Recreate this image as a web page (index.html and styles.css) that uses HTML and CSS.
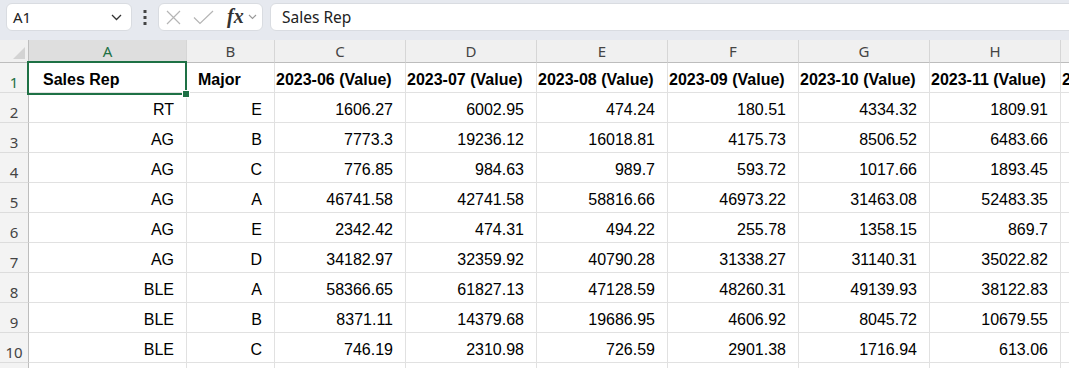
FILE: index.html
```html
<!DOCTYPE html>
<html lang="en">
<head>
  <meta charset="UTF-8" />
  <title>Sales Rep - Workbook</title>
  <link rel="stylesheet" href="styles.css">
</head>
<body>
  <!-- Formula bar -->
  <div class="formula-bar">
    <div class="name-box">
      <span>A1</span>
      <svg width="11" height="7" viewBox="0 0 11 7"><path d="M1 1l4.5 4.5L10 1" fill="none" stroke="#333" stroke-width="1.3"/></svg>
    </div>
    <div class="more">
      <svg width="4" height="15" viewBox="0 0 4 15"><rect x="0.5" y="0" width="3" height="3" fill="#444"/><rect x="0.5" y="6" width="3" height="3" fill="#444"/><rect x="0.5" y="12" width="3" height="3" fill="#444"/></svg>
    </div>
    <div class="fx-box">
      <svg class="fx-icon" width="15" height="15" viewBox="0 0 15 15"><path d="M1 1l13 13M14 1L1 14" stroke="#b5b5b5" stroke-width="1.2" fill="none"/></svg>
      <svg class="fx-icon" width="21" height="15" viewBox="0 0 21 15"><path d="M1 7.5l6 6L20 1" stroke="#b5b5b5" stroke-width="1.2" fill="none"/></svg>
      <span class="fx">fx</span>
      <svg width="9" height="6" viewBox="0 0 9 6"><path d="M1 1l3.5 3.5L8 1" fill="none" stroke="#999" stroke-width="1.1"/></svg>
    </div>
    <div class="formula-input">Sales Rep</div>
  </div>

  <!-- Sheet -->
  <div class="sheet-wrap">
    <div class="sheet" id="sheet">
      <div class="corner"><span class="tri"></span></div>
      <div class="col-head active">A</div>
      <div class="col-head">B</div>
      <div class="col-head">C</div>
      <div class="col-head">D</div>
      <div class="col-head">E</div>
      <div class="col-head">F</div>
      <div class="col-head">G</div>
      <div class="col-head">H</div>
      <div class="col-head"></div>

      <div class="row-head active">1</div>
      <div class="cell head first">Sales Rep</div>
      <div class="cell head second">Major</div>
      <div class="cell head">2023-06 (Value)</div>
      <div class="cell head">2023-07 (Value)</div>
      <div class="cell head">2023-08 (Value)</div>
      <div class="cell head">2023-09 (Value)</div>
      <div class="cell head">2023-10 (Value)</div>
      <div class="cell head">2023-11 (Value)</div>
      <div class="cell head last">20</div>
    </div>
    <div class="selection"><span class="handle"></span></div>
  </div>

  <script>
    const rows = [
      ['RT', 'E', '1606.27', '6002.95', '474.24', '180.51', '4334.32', '1809.91'],
      ['AG', 'B', '7773.3', '19236.12', '16018.81', '4175.73', '8506.52', '6483.66'],
      ['AG', 'C', '776.85', '984.63', '989.7', '593.72', '1017.66', '1893.45'],
      ['AG', 'A', '46741.58', '42741.58', '58816.66', '46973.22', '31463.08', '52483.35'],
      ['AG', 'E', '2342.42', '474.31', '494.22', '255.78', '1358.15', '869.7'],
      ['AG', 'D', '34182.97', '32359.92', '40790.28', '31338.27', '31140.31', '35022.82'],
      ['BLE', 'A', '58366.65', '61827.13', '47128.59', '48260.31', '49139.93', '38122.83'],
      ['BLE', 'B', '8371.11', '14379.68', '19686.95', '4606.92', '8045.72', '10679.55'],
      ['BLE', 'C', '746.19', '2310.98', '726.59', '2901.38', '1716.94', '613.06']
    ];

    const sheet = document.getElementById('sheet');
    rows.forEach(function (row, i) {
      let html = '<div class="row-head">' + (i + 2) + '</div>';
      row.forEach(function (val) {
        html += '<div class="cell num">' + val + '</div>';
      });
      html += '<div class="cell num"></div>';
      sheet.insertAdjacentHTML('beforeend', html);
    });
    // partly visible row at the bottom
    let tail = '<div class="row-head short"></div>';
    for (let c = 0; c < 9; c++) tail += '<div class="cell short"></div>';
    sheet.insertAdjacentHTML('beforeend', tail);
  </script>
</body>
</html>
```

FILE: styles.css
```css
body {
  margin: 0;
  font-family: "Liberation Sans", Arial, sans-serif;
  background-color: #fff;
  overflow: hidden;
  width: 1069px;
  height: 368px;
}

/* formula bar */
.formula-bar {
  height: 40px;
  box-sizing: border-box;
  background-color: #e6e9ef;
  display: flex;
  align-items: flex-start;
  padding: 3px 0 0 6px;
  font-family: "Noto Sans", "Open Sans", sans-serif;
}
.name-box {
  width: 126px;
  height: 28px;
  box-sizing: border-box;
  background-color: #fff;
  border: 1px solid #d9dce1;
  border-radius: 6px;
  display: flex;
  align-items: center;
  justify-content: space-between;
  padding: 0 9px 0 6px;
  font-size: 15px;
  color: #222;
}
.more {
  width: 26px;
  height: 28px;
  display: flex;
  align-items: center;
  justify-content: center;
}
.fx-box {
  width: 105px;
  height: 28px;
  box-sizing: border-box;
  background-color: #fff;
  border: 1px solid #d9dce1;
  border-radius: 6px;
  display: flex;
  align-items: center;
  padding: 0 5px 0 7px;
}
.fx-icon {
  margin-right: 12px;
}
.fx-icon + .fx-icon {
  margin-right: 13px;
}
.fx {
  font-family: "Liberation Serif", "Times New Roman", serif;
  font-style: italic;
  font-weight: bold;
  font-size: 20px;
  color: #333;
  margin-right: 4px;
  line-height: 1;
  margin-top: -2px;
}
.formula-input {
  flex: 1;
  height: 28px;
  box-sizing: border-box;
  margin-left: 7px;
  margin-right: -10px;
  background-color: #fff;
  border: 1px solid #d9dce1;
  border-radius: 6px;
  padding: 0 11px;
  font-size: 15.5px;
  line-height: 26px;
  color: #222;
}

/* sheet grid */
.sheet-wrap {
  position: relative;
  width: 1069px;
  height: 328px;
  overflow: hidden;
}
.sheet {
  display: grid;
  grid-template-columns: 29px 158px 88px repeat(6, 131px) 9px;
}
.corner {
  height: 23px;
  box-sizing: border-box;
  background-color: #f0f0f0;
  border-right: 1px solid #bdbdbd;
  border-bottom: 1px solid #bdbdbd;
  position: relative;
}
.tri {
  position: absolute;
  right: 3px;
  bottom: 3px;
  width: 0;
  height: 0;
  border-left: 12px solid transparent;
  border-bottom: 12px solid #d3d3d3;
}
.col-head {
  height: 23px;
  box-sizing: border-box;
  background-color: #f0f0f0;
  border-right: 1px solid #d6d6d6;
  border-bottom: 1px solid #bdbdbd;
  text-align: center;
  font-family: "Noto Sans", "Open Sans", sans-serif;
  font-size: 15px;
  line-height: 23px;
  color: #444;
}
.col-head.active {
  background-color: #dedede;
  color: #1e7145;
}
.row-head {
  height: 30px;
  box-sizing: border-box;
  background-color: #f3f3f3;
  border-right: 1px solid #bdbdbd;
  border-bottom: 1px solid #dcdcdc;
  text-align: center;
  font-family: "Noto Sans", "Open Sans", sans-serif;
  font-size: 15px;
  line-height: 26px;
  padding-top: 6px;
  color: #444;
}
.row-head.active {
  color: #1e7145;
}
.cell {
  height: 30px;
  box-sizing: border-box;
  border-right: 1px solid #e1e1e1;
  border-bottom: 1px solid #e1e1e1;
  font-size: 16px;
  line-height: 26px;
  padding-top: 4px;
  white-space: nowrap;
  color: #000;
}
.short {
  height: 5px;
  padding: 0;
  border-bottom: none;
}
.cell.head {
  font-weight: bold;
  padding-left: 1px;
  overflow: hidden;
}
.cell.head.first {
  padding-left: 14px;
}
.cell.head.second {
  padding-left: 11px;
}
.cell.num {
  text-align: right;
  padding-right: 12px;
}
.cell.num:last-child,
.sheet > .cell:nth-child(10n) {
  padding-right: 0;
}

/* active cell */
.selection {
  position: absolute;
  left: 27px;
  top: 21px;
  width: 160px;
  height: 34px;
  box-sizing: border-box;
  border: 2px solid #1e7145;
}
.handle {
  position: absolute;
  right: -5px;
  bottom: -5px;
  width: 6px;
  height: 6px;
  background-color: #1e7145;
  border: 1px solid #fff;
}
```
